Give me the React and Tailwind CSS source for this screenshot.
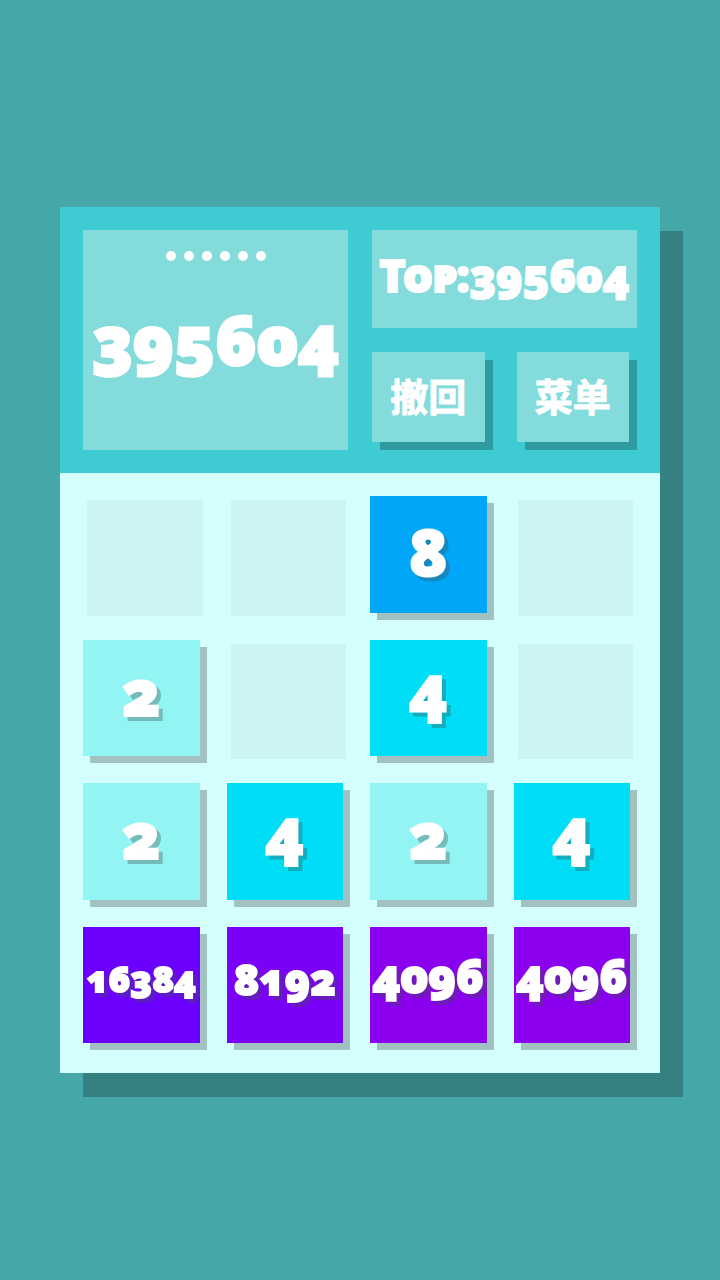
const tileStyles = {
    2: "bg-[#93F5F3] text-[64px] pb-3",
    4: "bg-[#00DEF7] text-[64px] pb-5",
    8: "bg-[#00A6F7] text-[64px] pb-1",
    4096: "bg-[#8A00EE] text-[46px] pb-5",
    8192: "bg-[#7B00F7] text-[42px] pb-3",
    16384: "bg-[#6C00FF] text-[36px] pb-3",
};

const board = [
    [0, 0, 8, 0],
    [2, 0, 4, 0],
    [2, 4, 2, 4],
    [16384, 8192, 4096, 4096],
];

const numberFont = "font-['Noto_Sans',sans-serif] font-black oldstyle-nums";

function Tile({ value }) {
    if (!value) {
        return (
            <div className="aspect-square p-1">
                <div className="h-full bg-[#CCF4F4]" />
            </div>
        );
    }
    return (
        <div className="aspect-square pr-[7px] pb-[7px]">
            <div className={`${tileStyles[value]} ${numberFont} flex h-full items-center justify-center leading-none shadow-[7px_7px_0_#A2C1C1]`}>
                <span className="[-webkit-text-stroke:2px_white] [filter:drop-shadow(4px_4px_0_rgba(60,80,80,0.35))]">{value}</span>
            </div>
        </div>
    );
}

function ActionButton({ children }) {
    return (
        <div className="flex-1 pr-2 pb-2">
            <button
                type="button"
                className="h-[90px] w-full cursor-pointer bg-[#83DBDC] pb-1 font-['Noto_Sans_CJK_SC',sans-serif] text-[38px] leading-none font-bold shadow-[8px_8px_0_#2F9BA0] [-webkit-text-stroke:1px_white]"
            >
                {children}
            </button>
        </div>
    );
}

export default function App() {
    const score = 395604;
    const top = 395604;

    return (
        <main className="flex min-h-screen items-center justify-center bg-[#45A7A8] px-[60px] text-white">
            <div className="w-full max-w-[600px] shadow-[23px_24px_0_#358081]">
                <header className="grid grid-cols-2 gap-6 bg-[#3ECBD2] p-[23px]">
                    <section className="flex flex-col bg-[#83DBDC]">
                        <div className="flex justify-center gap-2 pt-[21px]">
                            {[0, 1, 2, 3, 4, 5].map((dot) => (
                                <span key={dot} className="size-[10px] rounded-full bg-white" />
                            ))}
                        </div>
                        <p className={`${numberFont} mt-11 text-center text-[68px] leading-none [-webkit-text-stroke:3px_white]`}>
                            {score}
                        </p>
                    </section>
                    <div className="flex flex-col gap-6">
                        <p className={`${numberFont} flex h-[98px] items-center justify-center bg-[#83DBDC] pb-2 text-[44px] leading-none [-webkit-text-stroke:2px_white] [font-variant-caps:small-caps]`}>
                            Top:{top}
                        </p>
                        <div className="flex gap-6">
                            <ActionButton>撤回</ActionButton>
                            <ActionButton>菜单</ActionButton>
                        </div>
                    </div>
                </header>
                <div className="grid grid-cols-4 gap-5 bg-[#D4FFFF] p-[23px]">
                    {board.flat().map((value, i) => (
                        <Tile key={i} value={value} />
                    ))}
                </div>
            </div>
        </main>
    );
}
